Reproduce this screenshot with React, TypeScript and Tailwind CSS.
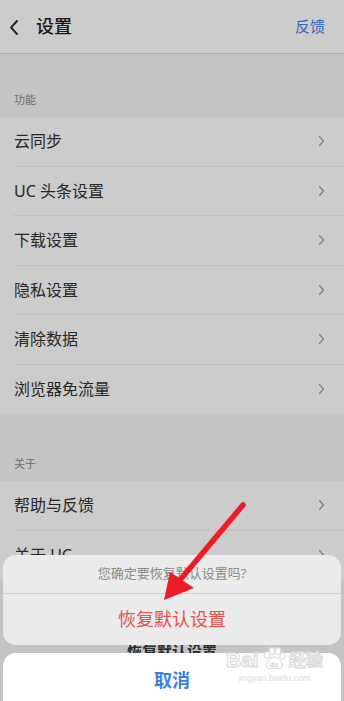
import React from 'react';

const functionRows = ['云同步', 'UC 头条设置', '下载设置', '隐私设置', '清除数据', '浏览器免流量'];
const aboutRows = ['帮助与反馈', '关于 UC'];

function Chevron() {
  return (
    <svg width="7" height="12" viewBox="0 0 7 12" className="shrink-0">
      <path d="M1.5 1.5 L5.5 6 L1.5 10.5" fill="none" stroke="#a3a3a3" strokeWidth="1.3" strokeLinecap="round" strokeLinejoin="round" />
    </svg>
  );
}

function Row({ label, last }: { label: string; last?: boolean }) {
  return (
    <div className="h-[49.5px] bg-white pl-[13px]">
      <div className={`h-full flex items-center justify-between pr-[19px] pl-px ${last ? '' : 'border-b border-[#f0f0f0]'}`}>
        <span className="text-[16px] text-[#333333]">{label}</span>
        <Chevron />
      </div>
    </div>
  );
}

function SectionLabel({ text, height }: { text: string; height: string }) {
  return (
    <div className={`${height} flex items-end pl-[14px] pb-[9px] text-[11px] text-[#8c8c8c] bg-[#f5f5f5]`}>{text}</div>
  );
}

function Watermark() {
  return (
    <div className="absolute left-[226px] top-[647px] flex flex-col items-center pointer-events-none">
      <div className="flex items-center gap-[2px] leading-none">
        <span className="text-[21px] font-bold text-white [-webkit-text-stroke:1px_#d6d6d6]" style={{ fontFamily: '"Liberation Sans", sans-serif' }}>Bai</span>
        <svg width="26" height="24" viewBox="0 0 26 24">
          <g fill="#ffffff" stroke="#d6d6d6" strokeWidth="1">
            <ellipse cx="6" cy="8" rx="3" ry="3.6" />
            <ellipse cx="11" cy="4" rx="3" ry="3.4" />
            <ellipse cx="17" cy="4" rx="3" ry="3.4" />
            <ellipse cx="21.5" cy="9" rx="2.8" ry="3.4" />
            <path d="M13 10 C8 10 4 17 6 20 C8 23 11 21 13 21 C15 21 19 23 21 20 C23 17 18 10 13 10 Z" />
          </g>
          <text x="13" y="19.5" textAnchor="middle" fontSize="7" fill="#d0d0d0" fontFamily="Liberation Sans, sans-serif" fontWeight="bold">du</text>
        </svg>
        <span className="text-[17px] font-bold text-white [-webkit-text-stroke:1px_#d6d6d6]">经验</span>
      </div>
      <span className="text-[9px] text-[#dadada] leading-none mt-[3px]" style={{ fontFamily: '"Liberation Sans", sans-serif' }}>jingyan.baidu.com</span>
    </div>
  );
}

function Arrow() {
  return (
    <svg className="absolute left-0 top-0 pointer-events-none" width="344" height="701" viewBox="0 0 344 701">
      <line x1="243" y1="505" x2="180" y2="580" stroke="#ee1c25" strokeWidth="5.5" strokeLinecap="round" />
      <polygon points="164,600 170,572 194,588" fill="#ee1c25" />
    </svg>
  );
}

export default function App() {
  return (
    <div
      className="relative w-[344px] h-[701px] overflow-hidden bg-[#f5f5f5]"
      style={{ fontFamily: '"Noto Sans", "Noto Sans CJK SC", sans-serif' }}
    >
      {/* page */}
      <div className="h-[54px] bg-white border-b border-[#dcdcdc] flex items-center justify-between pl-[7px] pr-[19px]">
        <div className="flex items-center gap-[15px]">
          <svg width="14" height="20" viewBox="0 0 14 20">
            <path d="M10 4 L4 10.5 L10 17" fill="none" stroke="#333333" strokeWidth="2" strokeLinecap="round" strokeLinejoin="round" />
          </svg>
          <span className="text-[18px] text-[#222222] font-medium">设置</span>
        </div>
        <span className="text-[15px] text-[#3d83e8]">反馈</span>
      </div>

      <SectionLabel text="功能" height="h-[63px]" />
      {functionRows.map((r, i) => (
        <Row key={r} label={r} last={i === functionRows.length - 1} />
      ))}

      <SectionLabel text="关于" height="h-[67px]" />
      {aboutRows.map((r) => (
        <Row key={r} label={r} />
      ))}

      {/* dim overlay */}
      <div className="absolute inset-0 bg-black/20" />

      {/* action sheet */}
      <div className="absolute left-[3px] right-[3px] top-[555px] flex flex-col">
        <div className="rounded-[13px] bg-[#ebebeb] overflow-hidden">
          <div className="h-[39px] flex items-center justify-center text-[13px] text-[#8a8a8a] border-b border-[#cfcfcf]">
            您确定要恢复默认设置吗?
          </div>
          <div className="h-[51px] flex items-center justify-center text-[18px] text-[#e5524c]">恢复默认设置</div>
        </div>
        <div className="h-[8px] overflow-hidden flex justify-center">
          <span className="text-[15px] font-bold text-[#2a2a2a] leading-none mt-[-1px]">恢复默认设置</span>
        </div>
        <div className="h-[60px] rounded-[13px] bg-white flex justify-center pt-[14px]">
          <span className="text-[18px] font-bold text-[#3b7ee0]">取消</span>
        </div>
      </div>

      <Watermark />
      <Arrow />
    </div>
  );
}
